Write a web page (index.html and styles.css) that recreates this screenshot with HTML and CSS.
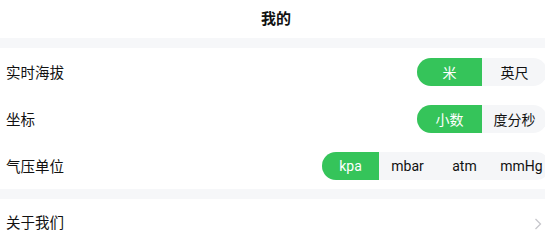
FILE: index.html
```html
<!DOCTYPE html>
<html lang="zh">
<head>
<meta charset="utf-8">
<link rel="stylesheet" href="styles.css">
</head>
<body>
<div class="page">
  <header class="title-bar">我的</header>
  <div class="gap"></div>
  <div class="row">
    <span class="label">实时海拔</span>
    <div class="seg seg-wide seg-r1">
      <span class="opt active">米</span>
      <span class="opt">英尺</span>
    </div>
  </div>
  <div class="row">
    <span class="label">坐标</span>
    <div class="seg seg-wide seg-r1">
      <span class="opt active">小数</span>
      <span class="opt">度分秒</span>
    </div>
  </div>
  <div class="row">
    <span class="label">气压单位</span>
    <div class="seg seg-narrow seg-r3">
      <span class="opt active">kpa</span>
      <span class="opt">mbar</span>
      <span class="opt">atm</span>
      <span class="opt">mmHg</span>
    </div>
  </div>
  <div class="gap"></div>
  <div class="row row-last">
    <span class="label">关于我们</span>
    <svg class="chev" width="8" height="12" viewBox="0 0 8 12"><path d="M1.5 1 L6.5 6 L1.5 11" fill="none" stroke="#c7c7cc" stroke-width="1.3"/></svg>
  </div>
</div>
</body>
</html>
```
FILE: styles.css
```css
html, body {
  margin: 0;
  padding: 0;
  background: #ffffff;
  overflow: hidden;
}
.page {
  width: 545px;
  font-family: Roboto, "Noto Sans CJK SC", sans-serif;
  color: #111111;
  overflow: hidden;
}
.title-bar {
  height: 38px;
  display: flex;
  align-items: center;
  justify-content: center;
  font-size: 15px;
  font-weight: 700;
  padding-left: 7px;
  padding-bottom: 4px;
  box-sizing: border-box;
}
.gap {
  height: 10px;
  background: #f6f7f9;
}
.row {
  height: 47px;
  display: flex;
  align-items: center;
  justify-content: space-between;
  padding-left: 6px;
}
.row-last {
  padding-bottom: 2px;
  box-sizing: border-box;
}
.label {
  font-size: 14.5px;
}
.seg {
  display: flex;
  height: 28px;
  border-radius: 14px;
  overflow: hidden;
  background: #f5f6f8;
  flex-shrink: 0;
}
.seg-r1 { margin-right: -2px; }
.seg-r3 { margin-right: -5px; }
.opt {
  display: flex;
  align-items: center;
  justify-content: center;
  font-size: 14px;
  color: #111111;
}
.seg-wide .opt { width: 65px; }
.seg-narrow .opt { width: 57px; }
.opt.active {
  background: #35c45a;
  color: #ffffff;
}
.chev {
  margin-right: 3px;
  margin-top: 4px;
}
```
